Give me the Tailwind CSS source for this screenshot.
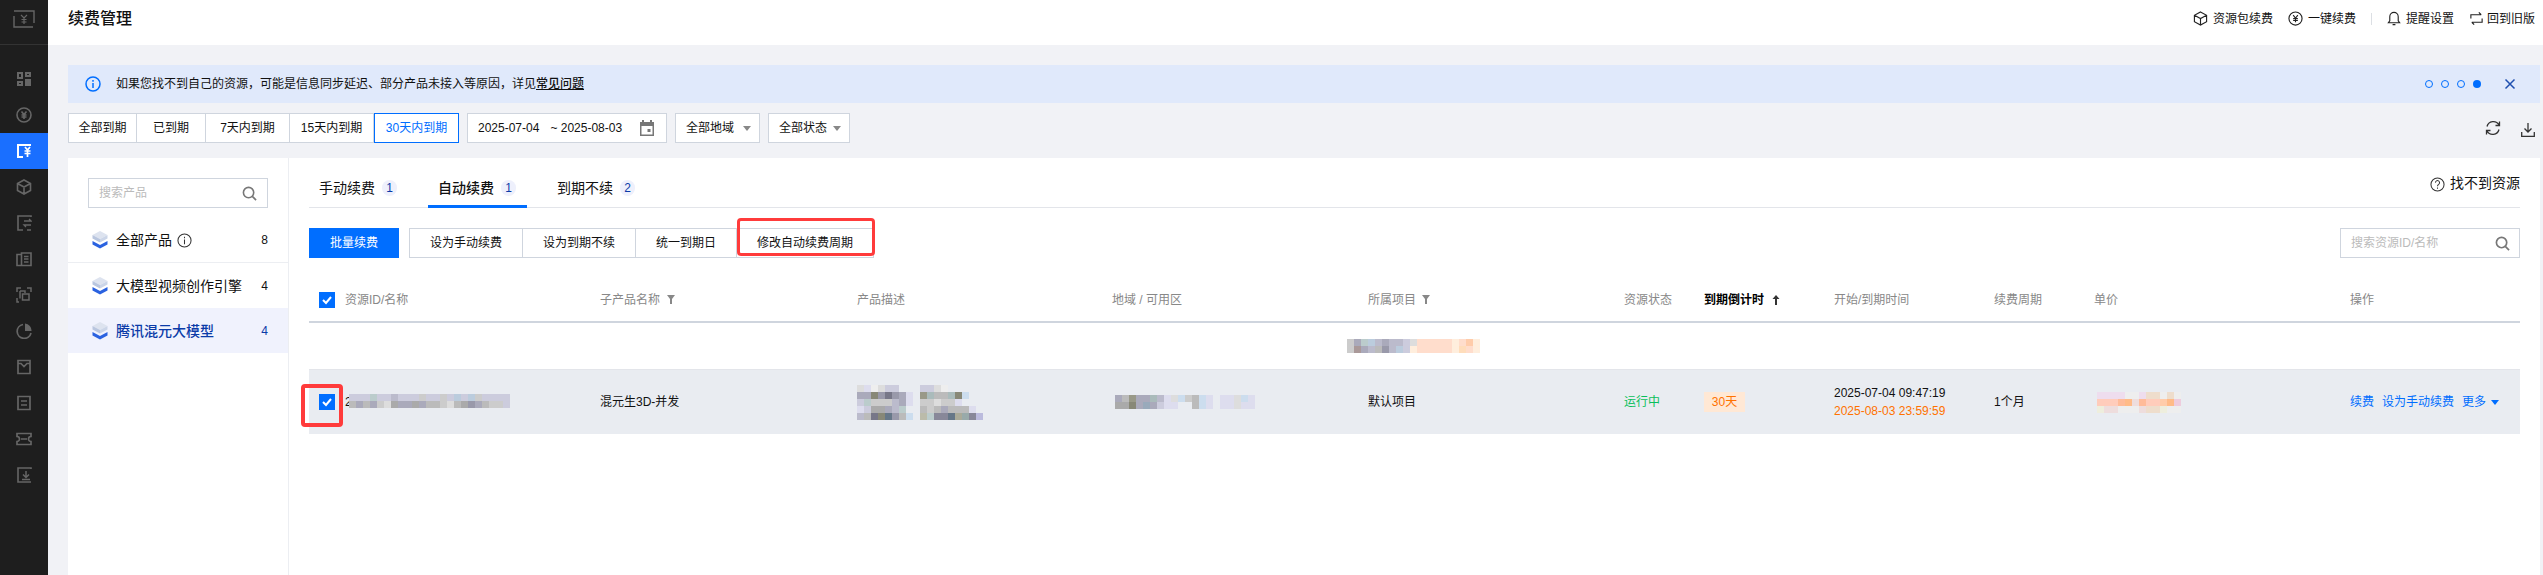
<!DOCTYPE html>
<html lang="zh-CN">
<head>
    <meta charset="UTF-8">
    <title>续费管理</title>
    <script src="https://cdn.jsdelivr.net/npm/@tailwindcss/browser@4"></script>
</head>
<body class="h-screen overflow-hidden flex bg-[#f1f2f6] text-[#111] text-xs font-['Liberation_Sans','Noto_Sans_CJK_SC',sans-serif]">

    <!-- sidebar -->
    <aside class="w-[48px] shrink-0 bg-[#1e1e1e] text-[#666]">
        <div class="h-[45px] pb-[6px] flex items-center justify-center border-b border-[#333]">
            <svg class="w-[24px] h-[24px]" viewBox="0 0 24 24" fill="none" stroke="currentColor" stroke-width="1.4"><path d="M2 9V20H21M2 4H22V16"/><path d="M9 8l3 3 3-3M12 11v6M9.5 12.5h5M9.5 15h5" stroke-width="1.2"/></svg>
        </div>
        <nav class="pt-[16px] flex flex-col">
            <a class="h-[36px] flex items-center justify-center"><svg class="w-[16px] h-[16px]" viewBox="0 0 16 16" fill="currentColor"><path d="M1 1h6v7H1zM9 1h6v5H9zM9 8h6v7H9zM1 10h6v5H1z"/><path d="M3 3h2v3H3zM11 3h2v1h-2zM3 12h2v1H3z" fill="#1e1e1e"/></svg></a>
            <a class="h-[36px] flex items-center justify-center"><svg class="w-[16px] h-[16px]" viewBox="0 0 16 16" fill="none" stroke="currentColor" stroke-width="1.6"><circle cx="8" cy="8" r="7"/><path d="M5.5 4.5L8 7.5l2.500-3M8 7.500V12M5.500 8h5M5.500 10h5"/></svg></a>
            <a class="h-[36px] flex items-center justify-center bg-[#1a6fff] text-white"><svg class="w-[16px] h-[16px]" viewBox="0 0 16 16" fill="none" stroke="currentColor" stroke-width="2"><path d="M7 2H2v12h5"/><path d="M2 2h13"/><path d="M9 4l2.500 3L14 4M11.500 7v7M8.500 8h6M8.500 10.500h6" stroke-width="1.700"/></svg></a>
            <a class="h-[36px] flex items-center justify-center"><svg class="w-[16px] h-[16px]" viewBox="0 0 16 16" fill="none" stroke="currentColor" stroke-width="1.600"><path d="M8 1l6.500 3.500v7L8 15l-6.500-3.500v-7zM1.500 4.500L8 8l6.500-3.500M8 8v7"/></svg></a>
            <a class="h-[36px] flex items-center justify-center"><svg class="w-[16px] h-[16px]" viewBox="0 0 16 16" fill="none" stroke="currentColor" stroke-width="1.600"><path d="M15 2V1H2v14h5M15 15H11"/><path d="M8 6h7l-2-2M15 10H8l2 2" stroke-width="1.300"/></svg></a>
            <a class="h-[36px] flex items-center justify-center"><svg class="w-[16px] h-[16px]" viewBox="0 0 16 16" fill="none" stroke="currentColor" stroke-width="1.600"><path d="M1 3.500h4.500v11H1zM5.500 2H15v12.500H5.500zM8 5.500h4.500M8 8h4.500M8 11h4.500"/></svg></a>
            <a class="h-[36px] flex items-center justify-center"><svg class="w-[16px] h-[16px]" viewBox="0 0 16 16" fill="none" stroke="currentColor" stroke-width="1.500"><path d="M1 5V1h4M11 1h4v4M1 11v4h2M4 4h5v2M6.500 7H13v6H6.500zM4 4v7.500"/></svg></a>
            <a class="h-[36px] flex items-center justify-center"><svg class="w-[16px] h-[16px]" viewBox="0 0 16 16" fill="none" stroke="currentColor" stroke-width="1.700"><path d="M7 1.500a7 7 0 1 0 8 8.500"/><path d="M9 .5a7 7 0 0 1 6.500 7.500H9z" fill="currentColor" stroke="none"/></svg></a>
            <a class="h-[36px] flex items-center justify-center"><svg class="w-[16px] h-[16px]" viewBox="0 0 16 16" fill="none" stroke="currentColor" stroke-width="1.700"><path d="M2 1.500h12v13H2zM2 4.500h3l3 3 3-3h3"/></svg></a>
            <a class="h-[36px] flex items-center justify-center"><svg class="w-[16px] h-[16px]" viewBox="0 0 16 16" fill="none" stroke="currentColor" stroke-width="1.700"><path d="M2 1.500h12v13H2zM5 6h6M5 10h6"/></svg></a>
            <a class="h-[36px] flex items-center justify-center"><svg class="w-[16px] h-[16px]" viewBox="0 0 16 16" fill="none" stroke="currentColor" stroke-width="1.700"><path d="M1 2.500h14v3a2.500 2.500 0 0 0 0 5v3H1v-3a2.500 2.500 0 0 0 0-5zM5 8h6"/></svg></a>
            <a class="h-[36px] flex items-center justify-center"><svg class="w-[16px] h-[16px]" viewBox="0 0 16 16" fill="none" stroke="currentColor" stroke-width="1.600"><path d="M15 2V1H2v14h13"/><path d="M10 4v6M7 7.500l3 3 3-3M6 12.500h8" stroke-width="1.500"/></svg></a>
        </nav>
    </aside>

    <div class="flex-1 min-w-0 flex flex-col">
        <!-- header -->
        <header class="h-[45px] shrink-0 bg-white flex items-center pl-[20px] pr-[8px] pb-[8px]">
            <h1 class="text-base font-medium">续费管理</h1>
            <div class="ml-auto flex items-center">
                <svg class="w-[15px] h-[15px] mr-[5px]" viewBox="0 0 16 16" fill="none" stroke="#222" stroke-width="1.200"><path d="M8 1l6.500 3.500v7L8 15l-6.500-3.500v-7zM1.500 4.500L8 8l6.500-3.500M8 8v7"/></svg>
                <span>资源包续费</span>
                <svg class="w-[15px] h-[15px] ml-[15px] mr-[5px]" viewBox="0 0 16 16" fill="none" stroke="#222" stroke-width="1.200"><circle cx="8" cy="8" r="7"/><path d="M5.500 4.500L8 7.500l2.500-3M8 7.500V12M5.500 8h5M5.500 10h5"/></svg>
                <span>一键续费</span>
                <span class="w-px h-[12px] bg-[#dcdfe4] ml-[15px] mr-[15px]"></span>
                <svg class="w-[14px] h-[15px] mr-[5px]" viewBox="0 0 14 16" fill="none" stroke="#222" stroke-width="1.200"><path d="M1 12.500h12l-1.500-2V6a4.500 4.500 0 0 0-9 0v4.500zM5.500 14.500h3"/></svg>
                <span>提醒设置</span>
                <svg class="w-[15px] h-[15px] ml-[15px] mr-[3px]" viewBox="0 0 16 16" fill="none" stroke="#222" stroke-width="1.200"><path d="M2 8V4h11M10.500 1.500L13 4M14 8v4H3M5.500 14.500L3 12"/></svg>
                <span>回到旧版</span>
            </div>
        </header>

        <div class="flex-1 min-h-0 flex flex-col pl-[20px] pr-[3px] pt-[20px]">
            <!-- notice -->
            <div class="h-[38px] shrink-0 bg-[#e0e9fb] flex items-center pl-[17px]">
                <svg class="w-[16px] h-[16px] mr-[15px]" viewBox="0 0 16 16" fill="none" stroke="#006eff" stroke-width="1.500"><circle cx="8" cy="8" r="7"/><path d="M8 7v5M8 4v1.700"/></svg>
                <p>如果您找不到自己的资源，可能是信息同步延迟、部分产品未接入等原因，详见<a class="underline font-medium">常见问题</a></p>
                <div class="ml-auto flex items-center gap-[8px]">
                    <span class="w-[8px] h-[8px] rounded-full border border-[#006eff]"></span>
                    <span class="w-[8px] h-[8px] rounded-full border border-[#006eff]"></span>
                    <span class="w-[8px] h-[8px] rounded-full border border-[#006eff]"></span>
                    <span class="w-[8px] h-[8px] rounded-full bg-[#006eff]"></span>
                </div>
                <svg class="w-[12px] h-[12px] ml-[23px] mr-[24px]" viewBox="0 0 12 12" fill="none" stroke="#1f4fb0" stroke-width="1.500"><path d="M1.500 1.500l9 9M10.500 1.500l-9 9"/></svg>
            </div>

            <!-- filters -->
            <div class="h-[30px] mt-[10px] shrink-0 flex items-center">
                <div class="flex h-full bg-white">
                    <button class="w-[69px] border border-[#cfd5de]">全部到期</button>
                    <button class="w-[69px] border border-l-0 border-[#cfd5de]">已到期</button>
                    <button class="w-[84px] border border-l-0 border-[#cfd5de]">7天内到期</button>
                    <button class="w-[84px] border border-l-0 border-[#cfd5de]">15天内到期</button>
                    <button class="w-[85px] border border-[#006eff] text-[#006eff]">30天内到期</button>
                </div>
                <div class="w-[200px] h-full ml-[8px] bg-white border border-[#cfd5de] flex items-center pl-[10px]">
                    <span>2025-07-04</span>
                    <span class="ml-[11px]">~ 2025-08-03</span>
                    <svg class="w-[14px] h-[16px] ml-[18px]" viewBox="0 0 14 16" fill="#777"><path d="M2 0h2v2h6V0h2v2h2v14H0V2h2zM1.500 6v8.500h11V6z"/><path d="M7.500 9h3v3h-3z"/></svg>
                </div>
                <div class="w-[85px] h-full ml-[8px] bg-white border border-[#cfd5de] flex items-center pl-[10px]">
                    <span>全部地域</span>
                    <span class="ml-[9px] w-0 h-0 border-x-[4px] border-x-transparent border-t-[5px] border-t-[#888]"></span>
                </div>
                <div class="w-[82px] h-full ml-[8px] bg-white border border-[#cfd5de] flex items-center pl-[10px]">
                    <span>全部状态</span>
                    <span class="ml-[6px] w-0 h-0 border-x-[4px] border-x-transparent border-t-[5px] border-t-[#888]"></span>
                </div>
                <div class="ml-auto flex items-center gap-[20px] pr-[5px]">
                    <svg class="w-[16px] h-[16px]" viewBox="0 0 16 16" fill="none" stroke="#333" stroke-width="1.300"><path d="M14 5A6.500 6.500 0 0 0 2 6.500M2 11a6.500 6.500 0 0 0 12-1.500M14.500 1.500V5.500H10.500M1.500 14.500V10.500H5.500"/></svg>
                    <svg class="w-[14px] h-[14px] translate-y-[2px]" viewBox="0 0 14 14" fill="none" stroke="#333" stroke-width="1.300"><path d="M7 0v8.500M3.500 5.500L7 9l3.500-3.500M.7 9v4.300h12.600V9"/></svg>
                </div>
            </div>

            <!-- panel -->
            <div class="flex-1 min-h-0 mt-[15px] bg-white flex">
                <!-- product list -->
                <div class="w-[221px] shrink-0 border-r border-[#eceef2]">
                    <div class="h-[30px] mx-[20px] mt-[20px] border border-[#cfd5de] flex items-center px-[10px] justify-between">
                        <span class="text-[#bbb]">搜索产品</span>
                        <svg class="w-[15px] h-[15px]" viewBox="0 0 16 16" fill="none" stroke="#777" stroke-width="1.700"><circle cx="7" cy="7" r="5.500"/><path d="M11 11l4 4"/></svg>
                    </div>
                    <ul class="mt-[10px] text-sm">
                        <li class="h-[45px] flex items-center pl-[24px] pr-[20px] border-b border-[#eceef2]">
                            <svg class="w-[16px] h-[18px] mr-[8px]" viewBox="0 0 16 18"><path d="M8 0l7.500 4L8 8 .5 4z" fill="#dde3ef"/><path d="M.5 4L8 8v3.500L.5 7.500z" fill="#b9c6df"/><path d="M15.500 4L8 8v3.500l7.500-4z" fill="#cbd5e8"/><path d="M.5 10L8 14l7.500-4v3.500L8 17.500.5 13.500z" fill="#2a62e0"/></svg>
                            <span>全部产品</span>
                            <svg class="w-[15px] h-[15px] ml-[5px]" viewBox="0 0 16 16" fill="none" stroke="#333" stroke-width="1.100"><circle cx="8" cy="8" r="7"/><path d="M8 7v5M8 4v1.500"/></svg>
                            <span class="ml-auto text-xs font-medium">8</span>
                        </li>
                        <li class="h-[45px] flex items-center pl-[24px] pr-[20px]">
                            <svg class="w-[16px] h-[18px] mr-[8px]" viewBox="0 0 16 18"><path d="M8 0l7.500 4L8 8 .5 4z" fill="#dde3ef"/><path d="M.5 4L8 8v3.500L.5 7.500z" fill="#b9c6df"/><path d="M15.500 4L8 8v3.500l7.500-4z" fill="#cbd5e8"/><path d="M.5 10L8 14l7.500-4v3.500L8 17.500.5 13.500z" fill="#2a62e0"/></svg>
                            <span>大模型视频创作引擎</span>
                            <span class="ml-auto text-xs font-medium">4</span>
                        </li>
                        <li class="h-[45px] flex items-center pl-[24px] pr-[20px] bg-[#f0f2fd]">
                            <svg class="w-[16px] h-[18px] mr-[8px]" viewBox="0 0 16 18"><path d="M8 0l7.500 4L8 8 .5 4z" fill="#dde3ef"/><path d="M.5 4L8 8v3.500L.5 7.500z" fill="#b9c6df"/><path d="M15.500 4L8 8v3.500l7.500-4z" fill="#cbd5e8"/><path d="M.5 10L8 14l7.500-4v3.500L8 17.500.5 13.500z" fill="#2a62e0"/></svg>
                            <span class="font-medium text-[#0b3ba8]">腾讯混元大模型</span>
                            <span class="ml-auto text-xs font-medium text-[#0b3ba8]">4</span>
                        </li>
                    </ul>
                </div>

                <!-- resources -->
                <div class="flex-1 min-w-0 pl-[20px] pr-[20px]">
                    <div class="h-[50px] flex items-end border-b border-[#e3e5ea] text-sm">
                        <a class="h-[50px] w-[119px] pl-[10px] pb-[9px] flex items-end gap-[7px]">手动续费<span class="mb-[2px] w-[15px] h-[16px] rounded-full bg-[#eef0fc] text-xs text-[#0b3ba8] flex items-center justify-center">1</span></a>
                        <a class="h-[50px] w-[99px] pl-[10px] pb-[7px] flex items-end gap-[7px] font-medium border-b-[3px] border-[#006eff] -mb-px">自动续费<span class="mb-[2px] w-[15px] h-[16px] rounded-full bg-[#eef0fc] text-xs font-normal text-[#0b3ba8] flex items-center justify-center">1</span></a>
                        <a class="h-[50px] ml-[30px] pb-[9px] flex items-end gap-[7px]">到期不续<span class="mb-[2px] w-[15px] h-[16px] rounded-full bg-[#eef0fc] text-xs text-[#0b3ba8] flex items-center justify-center">2</span></a>
                        <a class="h-[50px] ml-auto pb-[14px] flex items-end gap-[5px]">
                            <svg class="w-[15px] h-[15px] mb-[1px]" viewBox="0 0 16 16" fill="none" stroke="#333" stroke-width="1.100"><circle cx="8" cy="8" r="7"/><path d="M5.800 6a2.200 2.200 0 1 1 3.400 1.900c-.8.5-1.200 1-1.200 2M8 11.300v1.200"/></svg>
                            找不到资源
                        </a>
                    </div>

                    <div class="mt-[20px] h-[30px] flex">
                        <button class="w-[90px] bg-[#006eff] text-white">批量续费</button>
                        <div class="relative flex ml-[10px]">
                            <button class="w-[114px] border border-[#cfd5de]">设为手动续费</button>
                            <button class="w-[113px] border border-l-0 border-[#cfd5de]">设为到期不续</button>
                            <button class="w-[101px] border border-l-0 border-[#cfd5de]">统一到期日</button>
                            <button class="w-[137px] border border-l-0 border-[#cfd5de]">修改自动续费周期</button>
                            <span class="absolute left-[328px] top-[-10px] w-[138px] h-[38px] border-[3px] border-[#ff3b3b] rounded-[4px]"></span>
                        </div>
                        <div class="ml-auto w-[180px] border border-[#cfd5de] flex items-center justify-between pl-[10px] pr-[9px]">
                            <span class="text-[#bbb]">搜索资源ID/名称</span>
                            <svg class="w-[15px] h-[15px]" viewBox="0 0 16 16" fill="none" stroke="#777" stroke-width="1.800"><circle cx="7" cy="7" r="5.500"/><path d="M11 11l4 4"/></svg>
                        </div>
                    </div>

                    <!-- table -->
                    <div class="mt-[20px]">
                        <div class="h-[45px] grid grid-cols-[36px_255px_257px_255px_256px_256px_80px_130px_160px_100px_256px_170px] items-center border-b-2 border-[#cfd5de] text-[#888]">
                            <span class="ml-[10px] w-[16px] h-[16px] bg-[#006eff] flex items-center justify-center"><svg class="w-[12px] h-[12px]" viewBox="0 0 12 12" fill="none" stroke="#fff" stroke-width="2"><path d="M2 6l3 3 5-6"/></svg></span>
                            <span>资源ID/名称</span>
                            <span class="flex items-center gap-[7px]">子产品名称<svg class="w-[8px] h-[9px]" viewBox="0 0 8 9" fill="#888"><path d="M0 0h8L5 4v5H3V4z"/></svg></span>
                            <span>产品描述</span>
                            <span>地域 / 可用区</span>
                            <span class="flex items-center gap-[6px]">所属项目<svg class="w-[8px] h-[9px]" viewBox="0 0 8 9" fill="#888"><path d="M0 0h8L5 4v5H3V4z"/></svg></span>
                            <span>资源状态</span>
                            <span class="flex items-center gap-[8px] font-bold text-black">到期倒计时<svg class="w-[8px] h-[10px]" viewBox="0 0 8 10" fill="#333"><path d="M4 0l3.500 4H5v6H3V4H.5z"/></svg></span>
                            <span>开始/到期时间</span>
                            <span>续费周期</span>
                            <span>单价</span>
                            <span>操作</span>
                        </div>
                        <div class="h-[46px] flex items-center pl-[1038px]">
                            <svg data-mosaic="ccc aab bcc bcd bbc aab bbc bbc ccd ddd fdc fdc fdc fdc fdc fed fdc fca fed fff|ccc a99 aab bbc bbb 99a bbc bcd ccd fed fdc fdc fdc fdc fdc fed fdb fdc fed fff" class="w-[140px] h-[14px] blur-[0.6px]"></svg>
                        </div>
                        <div class="relative h-[65px] grid grid-cols-[36px_255px_257px_255px_256px_256px_80px_130px_160px_100px_256px_170px] items-center bg-[#e9ecf1] border-t border-[#e3e5ea]">
                            <span class="ml-[10px] w-[16px] h-[16px] bg-[#006eff] flex items-center justify-center"><svg class="w-[12px] h-[12px]" viewBox="0 0 12 12" fill="none" stroke="#fff" stroke-width="2"><path d="M2 6l3 3 5-6"/></svg></span>
                            <span class="flex items-center">2<svg data-mosaic="ccd ccd ccd bcc ccd ccd bbc ccd ccd ccd ccc ccd ccd ccc ccd bcd ccd bcd ccc ccd ccd ccd ccd|bbb aab bbb aab ccc ddd aaa aab aab aaa aab bbb bbb ccc ddd bbb aaa 99a aab bbb ccc ccc ccd" class="w-[161px] h-[14px] -translate-y-[1px] -ml-[3px] blur-[0.6px]"></svg></span>
                            <span>混元生3D-并发</span>
                            <span><svg data-mosaic="ddd dde eee ddd ccd ccd - - - ccd ccd ddd eee - - - - -|aab aab 887 99a 778 99a aab dde - 998 abb bbb bbb abb 887 cde - -|ccd bcc ccc ccc ccc bbc aab dde - ccc ccc ddd ccc ccc dde - - -|dde ccd aaa aaa aab bbc bcc - - bbb ccc bbb aab bbb bbb bbb dde -|bbc bbb 778 887 678 99a bbb cde - bba bcc 889 889 678 aa9 9aa 889 bbd" class="w-[126px] h-[35px] blur-[0.6px]"></svg></span>
                            <span><svg data-mosaic="aab bbb 998 aab aab abb bbc dde ddd cde ccc bbb cde dde - dde dde ddd cde dde|aaa aaa 887 aab 9ab aab ccd dde dde - - bbb cde dde - dde dde ddd dde dde" class="ml-[3px] w-[140px] h-[14px] blur-[0.6px]"></svg></span>
                            <span>默认项目</span>
                            <span class="text-[#0abf5b]">运行中</span>
                            <span class="w-[41px] h-[20px] bg-[#ffe8d5] text-[#ff7200] flex items-center justify-center">30天</span>
                            <div class="flex flex-col gap-[6px] leading-[12px]">
                                <span>2025-07-04 09:47:19</span>
                                <span class="text-[#ff7200]">2025-08-03 23:59:59</span>
                            </div>
                            <span>1个月</span>
                            <span><svg data-mosaic="ede ede ede ede eee eee ede edc edc eee edc eee|fcb fcb fcb fb9 fb8 edd fb9 fcb fcb fca fb8 ecd|eed edd edd eee eee eee edd edc edc eed eee eee" class="ml-[3px] w-[84px] h-[21px] blur-[0.6px]"></svg></span>
                            <div class="flex items-center text-[#006eff]">
                                <span>续费</span>
                                <span class="ml-[8px]">设为手动续费</span>
                                <span class="ml-[8px]">更多</span>
                                <span class="ml-[5px] w-0 h-0 border-x-[4px] border-x-transparent border-t-[5px] border-t-[#006eff]"></span>
                            </div>
                            <span class="absolute left-[-8px] top-[14px] w-[42px] h-[43px] border-[4px] border-[#ff3b3b] rounded-[4px]"></span>
                        </div>
                    </div>
                </div>
            </div>
        </div>
    </div>

    <script>
        // the redacted cells are drawn as small mosaics from the colour rows in data-mosaic
        document.querySelectorAll('svg[data-mosaic]').forEach(function(svg) {
            const rows = svg.dataset.mosaic.split('|');
            const cols = rows[0].split(' ').length;
            svg.setAttribute('viewBox', '0 0 ' + cols * 7 + ' ' + rows.length * 7);
            rows.forEach(function(row, y) {
                row.split(' ').forEach(function(color, x) {
                    if (color === '-') return;
                    const rect = document.createElementNS('http://www.w3.org/2000/svg', 'rect');
                    rect.setAttribute('x', x * 7);
                    rect.setAttribute('y', y * 7);
                    rect.setAttribute('width', 7);
                    rect.setAttribute('height', 7);
                    rect.setAttribute('fill', '#' + color);
                    svg.appendChild(rect);
                });
            });
        });
    </script>
</body>
</html>
